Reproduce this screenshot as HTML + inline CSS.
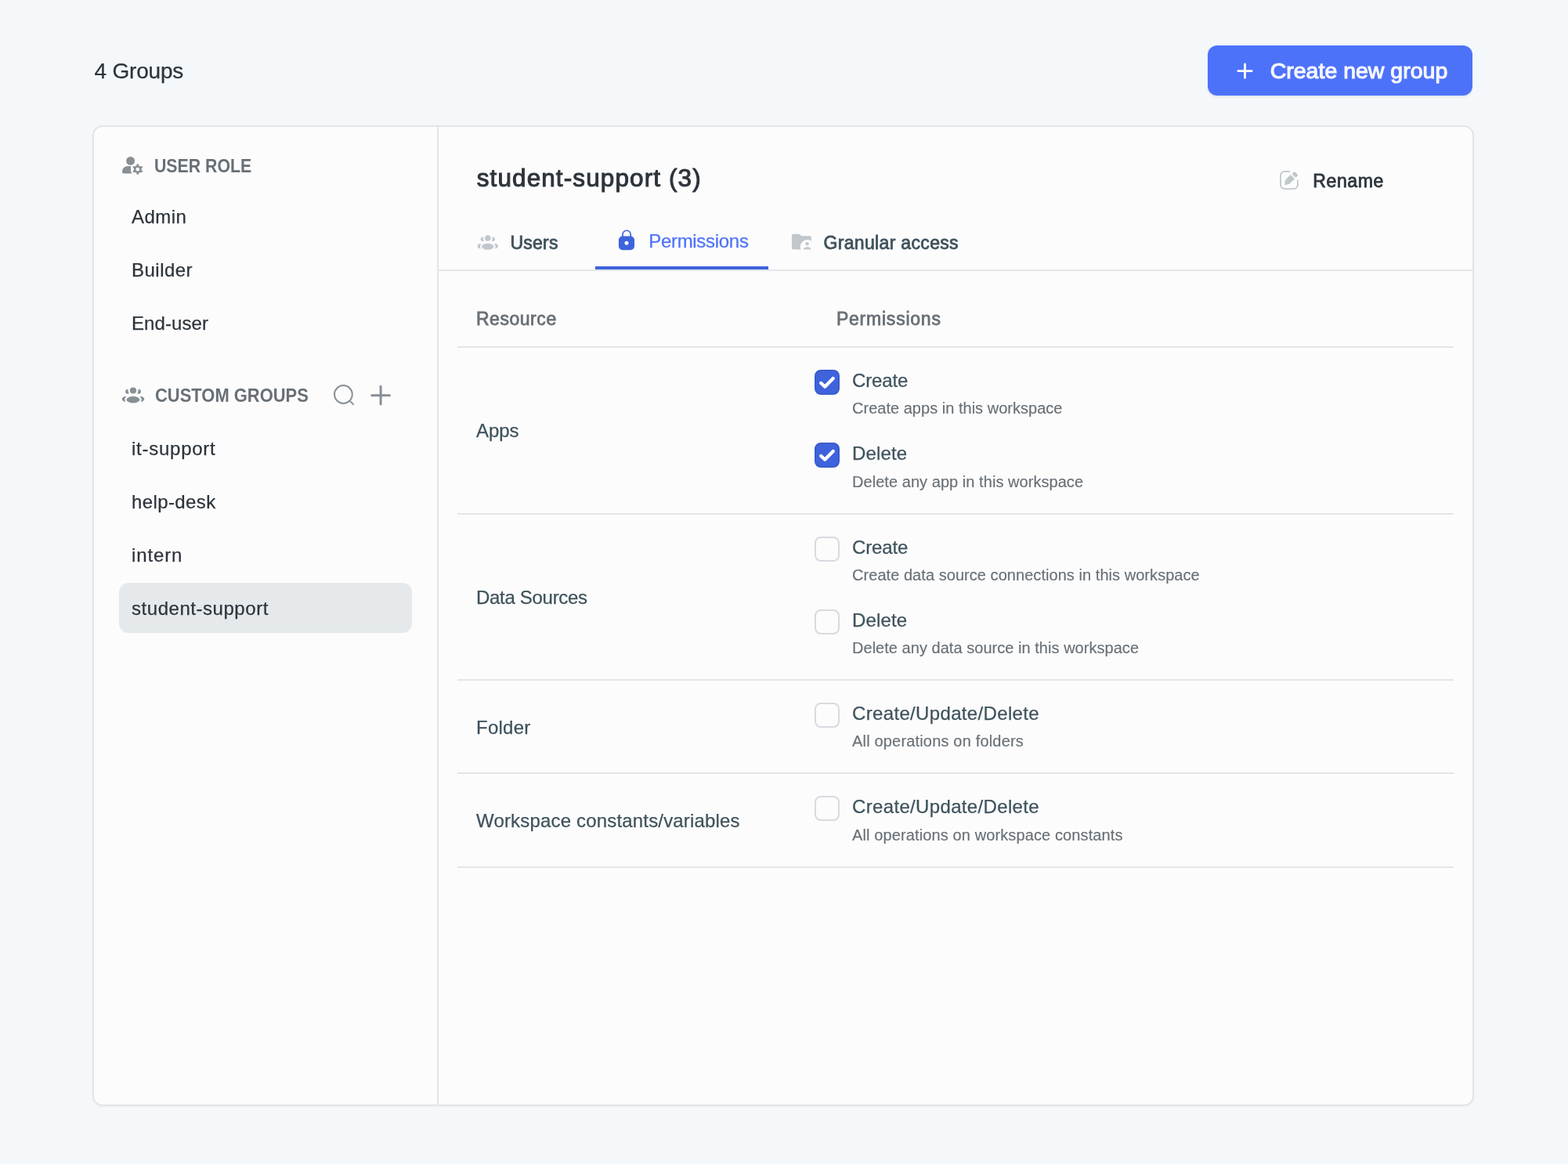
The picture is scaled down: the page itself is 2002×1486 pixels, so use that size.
<!DOCTYPE html>
<html lang="en">
<head>
<meta charset="utf-8">
<title>Groups</title>
<style>
*{box-sizing:border-box;margin:0;padding:0}
html,body{width:2002px;height:1486px;overflow:hidden}
body{background:#f4f8fb;font-family:"Liberation Sans",sans-serif;color:#11181c;position:relative}
#app{position:absolute;left:0;top:0;width:2002px;height:1486px;will-change:transform}
.b{font-weight:700;transform-origin:0 50%}
.tabtxt.m{font-size:23px;-webkit-text-stroke:.8px #3e525b}
.count{position:absolute;left:120.500px;top:71px;font-size:28px;line-height:40px;color:#2d343b;white-space:nowrap;letter-spacing:-.2px;-webkit-text-stroke:.25px #2d343b}
.btn{position:absolute;left:1542px;top:58px;width:338px;height:64px;border-radius:12px;background:#4d72fa;box-shadow:0 2px 3px rgba(16,24,40,.07);color:#fdfdfe}
.btn svg{position:absolute;left:36px;top:21px}
.btn span{position:absolute;left:79.700px;top:12.200px;line-height:40px;font-size:28.500px;white-space:nowrap;letter-spacing:0;-webkit-text-stroke:1.1px #f6f8fe;color:#f6f8fe}
.card{position:absolute;left:118px;top:160px;width:1764px;height:1252px;border:2px solid #e2e6e9;border-radius:13px;background:#fcfcfd;box-shadow:0 1px 3px rgba(16,24,40,.04)}
.card>*{position:absolute}
.side{left:0;top:0;width:440px;height:1248px;border-right:2px solid #e2e6e9}
.main{left:440px;top:0;width:1320px;height:1248px}
.side>*,.main>*{position:absolute}
.lab{color:#687076;font-size:24px;line-height:40px;white-space:nowrap}
.item{left:32px;width:374px;height:64px;border-radius:12px;padding-left:16px;line-height:65px;font-size:24px;color:#2d343b;white-space:nowrap;-webkit-text-stroke:.25px #2d343b}
.item.sel{background:#e5e9ec}
.title{left:48.700px;top:42.600px;font-size:31.500px;line-height:44px;color:#2d343b;white-space:nowrap;letter-spacing:1.1px;-webkit-text-stroke:1px #2d343b}
.tabtxt{font-size:24px;line-height:40px;color:#3e525b;white-space:nowrap}
.hr{left:24px;width:1272px;height:2px;background:#e2e6e9}
.res{left:48px;font-size:24px;line-height:40px;color:#3e525b;white-space:nowrap;-webkit-text-stroke:.25px #3e525b}
.cb{left:480px;width:32px;height:32px;border-radius:8px;border:2px solid #d7dbdf;background:transparent}
.cb.on{border:2px solid #3a5ccc;background:#3e63dd}
.cb svg{position:absolute;left:-2px;top:-2px}
.pn{left:528px;font-size:24px;line-height:40px;color:#3e525b;white-space:nowrap;-webkit-text-stroke:.25px #3e525b}
.pd{left:528px;font-size:20px;line-height:32px;color:#687076;white-space:nowrap;-webkit-text-stroke:.15px #687076}
</style>
</head>
<body>
<div id="app">
<div class="count">4 Groups</div>
<div class="btn">
  <svg style="left:36px;top:21px" width="23" height="23" viewBox="0 0 23 23" aria-hidden="true"><path d="M11.500 2.850v17.500M2.750 11.600h17.500" stroke="#fdfdfe" stroke-width="2.800" stroke-linecap="round" fill="none"/></svg>
  <span>Create new group</span>
</div>

<div class="card">
  <div class="side">
    <svg style="left:34px;top:36px" width="30" height="28" viewBox="0 0 30 28" aria-hidden="true"><g fill="#889096"><circle cx="12.600" cy="7.400" r="5.450"/><path d="M13 14H9.600C5.200 14 2.050 16.900 2.050 21.300v.3a2 2 0 0 0 2 2H14.500L13 20.600z"/></g><g stroke="#889096" fill="none"><circle cx="21.800" cy="18.150" r="3.650" stroke-width="2.600"/><path d="M21.800 13.550v-.8M21.800 22.750v.8M17.820 15.850l-.69-.4M25.780 15.850l.69-.4M17.820 20.450l-.69.4M25.780 20.450l.69.4" stroke-width="2.900" stroke-linecap="round"/></g></svg>
    <div class="lab b" style="left:76.500px;top:30px;transform:scaleX(.887)">USER ROLE</div>
    <div class="item" style="top:82px;letter-spacing:0.46px">Admin</div>
    <div class="item" style="top:150px;letter-spacing:0.48px">Builder</div>
    <div class="item" style="top:218px;letter-spacing:0.09px">End-user</div>

    <svg style="left:34px;top:330px" width="32" height="26" viewBox="0 0 32 26" aria-hidden="true"><g fill="#889096"><circle cx="8.95" cy="7.8" r="2.9"/><circle cx="23.05" cy="7.8" r="2.9"/><ellipse cx="6.8" cy="17.55" rx="5" ry="3.45"/><ellipse cx="25.2" cy="17.55" rx="5" ry="3.45"/></g><g fill="#fcfcfd"><circle cx="16" cy="6.5" r="6.5"/><ellipse cx="16" cy="18" rx="10.75" ry="6.8"/></g><g fill="#889096"><circle cx="16" cy="6.5" r="4.1"/><ellipse cx="16" cy="18.200" rx="8.350" ry="4.300"/></g></svg>
    <div class="lab b" style="left:78.400px;top:323px;transform:scaleX(.914)">CUSTOM GROUPS</div>
    <svg style="left:304px;top:327px" width="30" height="30" viewBox="0 0 30 30" aria-hidden="true"><circle cx="14.400" cy="14.500" r="11.400" fill="none" stroke="#889096" stroke-width="2"/><path d="M22.500 22.600l4.600 4.500" stroke="#889096" stroke-width="2" stroke-linecap="round"/></svg>
    <svg style="left:352px;top:328px" width="28" height="30" viewBox="0 0 28 30" aria-hidden="true"><path d="M14.100 3.300v22.800M2.750 14.700h22.700" stroke="#889096" stroke-width="3" stroke-linecap="round" fill="none"/></svg>

    <div class="item" style="top:378px;letter-spacing:0.74px">it-support</div>
    <div class="item" style="top:446px;letter-spacing:0.4px">help-desk</div>
    <div class="item" style="top:514px;letter-spacing:0.86px">intern</div>
    <div class="item sel" style="top:582px;letter-spacing:0.54px">student-support</div>
  </div>

  <div class="main">
    <div class="title">student-support (3)</div>
    <svg style="left:1072px;top:54px" width="28" height="28" viewBox="0 0 28 28" aria-hidden="true"><path d="M14.300 2.950H8.200A5.200 5.200 0 0 0 3 8.150v11.750a5.200 5.200 0 0 0 5.200 5.200h11.500a5.200 5.200 0 0 0 5.200-5.200V14.400" fill="none" stroke="#c1c8cd" stroke-width="1.800" stroke-linecap="round"/><path d="M9 13.700 15.800 7.100l5.300 5.100-6.500 6.300-5.300 1.700a.8.800 0 0 1-1-.9z" fill="#c1c8cd"/><rect x="-3.500" y="-2.350" width="7" height="4.700" rx="1.400" transform="translate(21.550 6.900) rotate(45)" fill="#c1c8cd"/></svg>
    <div class="tabtxt" style="left:1116.300px;top:49px;font-size:23px;color:#2d343b;letter-spacing:.6px;-webkit-text-stroke:.8px #2d343b">Rename</div>

    <svg style="left:48.180px;top:136.060px" width="29.6" height="24.05" viewBox="0 0 32 26" aria-hidden="true"><g fill="#c1c8cd"><circle cx="8.95" cy="7.8" r="2.9"/><circle cx="23.05" cy="7.8" r="2.9"/><ellipse cx="6.8" cy="17.55" rx="5" ry="3.45"/><ellipse cx="25.2" cy="17.55" rx="5" ry="3.45"/></g><g fill="#fcfcfd"><circle cx="16" cy="6.5" r="6.5"/><ellipse cx="16" cy="18" rx="10.75" ry="6.8"/></g><g fill="#c1c8cd"><circle cx="16" cy="6.5" r="4.1"/><ellipse cx="16" cy="18.200" rx="8.350" ry="4.300"/></g></svg>
    <div class="tabtxt m" style="left:91.400px;top:128px;letter-spacing:.25px">Users</div>

    <svg style="left:229px;top:130px" width="22" height="28" viewBox="0 0 22 28" aria-hidden="true"><path d="M6 11V7.350a5.100 5.100 0 0 1 10.200 0V11" fill="none" stroke="#3e63dd" stroke-width="1.700"/><rect x="0.930" y="9.500" width="20.100" height="17.700" rx="5" fill="#3e63dd"/><circle cx="11" cy="18.300" r="2.500" fill="#fcfcfd"/></svg>
    <div class="tabtxt" style="left:268.200px;top:126px;color:#4d72fa;letter-spacing:-.3px;-webkit-text-stroke:.25px #4d72fa">Permissions</div>
    <div style="left:200px;top:178px;width:221px;height:4px;background:#3e63dd"></div>

    <svg style="left:450px;top:135px" width="28" height="24" viewBox="0 0 28 24" aria-hidden="true"><path d="M.900 3.870a2 2 0 0 1 2-2H10.100q.9 0 1.500.6L13.300 4.200H23.960a2 2 0 0 1 2 2V21.600H2.900a2 2 0 0 1-2-2z" fill="#c1c8cd"/><circle cx="20.900" cy="18.200" r="9.100" fill="#fcfcfd"/><circle cx="20.600" cy="14.300" r="2.300" fill="#c1c8cd"/><path d="M15.800 21.600c0-2 2-3.400 4.950-3.400s4.950 1.400 4.950 3.400z" fill="#c1c8cd"/></svg>
    <div class="tabtxt m" style="left:491.500px;top:128px;letter-spacing:.33px">Granular access</div>

    <div style="left:0;top:182px;width:1320px;height:2px;background:#e2e6e9"></div>

    <div class="lab" style="left:47.900px;top:225px;font-size:23px;letter-spacing:.55px;-webkit-text-stroke:.8px #687076">Resource</div>
    <div class="lab" style="left:507.900px;top:225px;font-size:23px;letter-spacing:.78px;-webkit-text-stroke:.8px #687076">Permissions</div>
    <div class="hr" style="top:280px"></div>

    <div class="res" style="top:368px;letter-spacing:-.1px">Apps</div>
    <div class="cb on" style="top:310px"><svg width="32" height="32" viewBox="0 0 32 32" aria-hidden="true"><path d="M8.2 17l5 4.800L23.800 11" fill="none" stroke="#fff" stroke-width="4.3" stroke-linecap="round" stroke-linejoin="round"/></svg></div><div class="pn" style="top:304px;letter-spacing:-0.16px">Create</div><div class="pd" style="top:343px;letter-spacing:0.02px">Create apps in this workspace</div>
    <div class="cb on" style="top:403px"><svg width="32" height="32" viewBox="0 0 32 32" aria-hidden="true"><path d="M8.2 17l5 4.800L23.800 11" fill="none" stroke="#fff" stroke-width="4.3" stroke-linecap="round" stroke-linejoin="round"/></svg></div><div class="pn" style="top:397px;letter-spacing:0.16px">Delete</div><div class="pd" style="top:437px;letter-spacing:0.05px">Delete any app in this workspace</div>
    <div class="hr" style="top:493px"></div>

    <div class="res" style="top:581px;letter-spacing:-.3px">Data Sources</div>
    <div class="cb" style="top:523px"></div><div class="pn" style="top:517px;letter-spacing:-0.16px">Create</div><div class="pd" style="top:556px;letter-spacing:0.05px">Create data source connections in this workspace</div>
    <div class="cb" style="top:616px"></div><div class="pn" style="top:610px;letter-spacing:0.16px">Delete</div><div class="pd" style="top:649px;letter-spacing:0.035px">Delete any data source in this workspace</div>
    <div class="hr" style="top:705px"></div>

    <div class="res" style="top:747px;letter-spacing:.24px">Folder</div>
    <div class="cb" style="top:735px"></div><div class="pn" style="top:729px;letter-spacing:0.34px">Create/Update/Delete</div><div class="pd" style="top:768px;letter-spacing:0.175px">All operations on folders</div>
    <div class="hr" style="top:824px"></div>

    <div class="res" style="top:866px;letter-spacing:.175px">Workspace constants/variables</div>
    <div class="cb" style="top:854px"></div><div class="pn" style="top:848px;letter-spacing:0.34px">Create/Update/Delete</div><div class="pd" style="top:888px;letter-spacing:0.117px">All operations on workspace constants</div>
    <div class="hr" style="top:944px"></div>
  </div>
</div>
</div>
</body>
</html>
